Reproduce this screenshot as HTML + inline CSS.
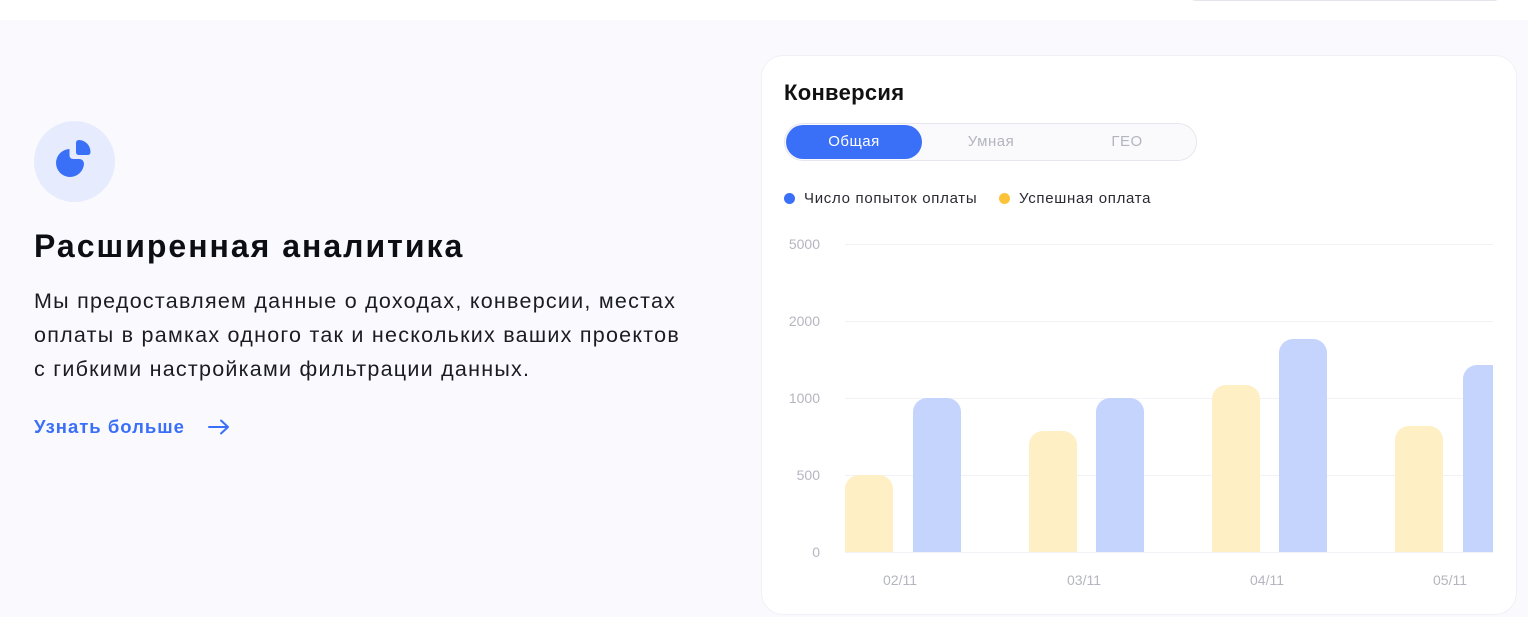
<!DOCTYPE html>
<html><head><meta charset="utf-8"><style>
*{margin:0;padding:0;box-sizing:border-box}
body{width:1528px;height:617px;overflow:hidden;background:#f9f9fe;font-family:"Liberation Sans","Noto Sans CJK SC",sans-serif;position:relative}
.top{position:absolute;left:0;top:0;width:1528px;height:20px;background:#fff}
.topline{position:absolute;left:1190px;top:-10px;width:310px;height:11px;border:1px solid #e4e4ec;border-radius:8px;background:#fff}
.ic{position:absolute;left:34px;top:121px;width:81px;height:81px;border-radius:50%;background:#e6ecfd}
h1{position:absolute;left:34px;top:228px;font-size:32px;font-weight:bold;color:#0d0d14;letter-spacing:2px;white-space:nowrap}
p{position:absolute;left:34px;top:284px;font-size:21.5px;line-height:34px;color:#1b1b22;letter-spacing:1.25px;white-space:nowrap}
.link{position:absolute;left:34px;top:416px;font-size:18.5px;font-weight:bold;color:#3a6ff7;white-space:nowrap;letter-spacing:1px}
.card{position:absolute;left:761px;top:55px;width:756px;height:560px;background:#fff;border-radius:22px;border:1px solid #f0f0f5}
.ct{position:absolute;left:784px;top:80px;font-size:22px;font-weight:bold;color:#111;letter-spacing:0.3px}
.tabs{position:absolute;left:784px;top:123px;width:413px;height:38px;border:1px solid #e6e6ee;border-radius:19px;background:#fafafd}
.tab{position:absolute;top:0;height:36px;line-height:36px;font-size:15px;color:#b4b4bf;text-align:center;letter-spacing:0.5px}
.act{left:1px;top:1px;width:136px;height:34px;line-height:34px;background:#3a6ff7;color:#fff;border-radius:17px}
.leg{position:absolute;top:190px;font-size:15px;color:#2a2a33;white-space:nowrap;letter-spacing:0.7px}
.dot{display:inline-block;width:11px;height:11px;border-radius:50%;margin-right:9px;vertical-align:-1px}
.yl{position:absolute;width:60px;left:760px;text-align:right;font-size:14px;color:#b5b5c0}
.gl{position:absolute;left:845px;width:648px;height:1px;background:#f2f2f6}
.bar{position:absolute;width:48px;border-radius:14px 14px 0 0}
.y{background:#feefc4}.b{background:#c4d4fd}
.xl{position:absolute;top:572px;font-size:14px;color:#b5b5c0}
</style></head><body>
<div class="top"></div><div class="topline"></div>
<div class="ic"><svg width="81" height="81" viewBox="0 0 81 81"><path d="M51 49a14 14 0 1 1-14.5-15v6q0 4 4 4h6q4 0 4.5 5z" fill="#3a6ff7" transform="translate(-1,-6)"/><path d="M43 28q0-3 3-3a12 12 0 0 1 11.5 12q0 3-3 3h-8.5q-3 0-3-3z" fill="#3a6ff7" transform="translate(-1,-6)"/></svg></div>
<h1>Расширенная аналитика</h1>
<p>Мы предоставляем данные о доходах, конверсии, местах<br>оплаты в рамках одного так и нескольких ваших проектов<br>с гибкими настройками фильтрации данных.</p>
<div class="link">Узнать больше <svg width="24" height="16" viewBox="0 0 24 16" style="margin-left:16px;vertical-align:-2px"><path d="M2 8h19M14 1.5l7 6.5-7 6.5" stroke="#3a6ff7" stroke-width="2" fill="none" stroke-linecap="round" stroke-linejoin="round"/></svg></div>
<div class="card"></div>
<div class="ct">Конверсия</div>
<div class="tabs"><div class="tab act">Общая</div><div class="tab" style="left:138px;width:136px">Умная</div><div class="tab" style="left:274px;width:136px">ГЕО</div></div>
<div class="leg" style="left:784px"><span class="dot" style="background:#3a6ff7"></span>Число попыток оплаты</div>
<div class="leg" style="left:999px"><span class="dot" style="background:#fdc338"></span>Успешная оплата</div>
<div class="yl" style="top:236px">5000</div><div class="gl" style="top:244px"></div>
<div class="yl" style="top:313px">2000</div><div class="gl" style="top:321px"></div>
<div class="yl" style="top:390px">1000</div><div class="gl" style="top:398px"></div>
<div class="yl" style="top:467px">500</div><div class="gl" style="top:475px"></div>
<div class="yl" style="top:544px">0</div><div class="gl" style="top:552px"></div>
<div class="bar y" style="left:845px;top:475px;height:77px"></div>
<div class="bar b" style="left:913px;top:398px;height:154px"></div>
<div class="bar y" style="left:1029px;top:431px;height:121px"></div>
<div class="bar b" style="left:1096px;top:398px;height:154px"></div>
<div class="bar y" style="left:1212px;top:385px;height:167px"></div>
<div class="bar b" style="left:1279px;top:339px;height:213px"></div>
<div class="bar y" style="left:1395px;top:426px;height:126px"></div>
<div class="bar b" style="left:1463px;top:365px;height:187px;width:30px;border-radius:14px 0 0 0"></div>
<div class="xl" style="left:883px">02/11</div>
<div class="xl" style="left:1067px">03/11</div>
<div class="xl" style="left:1250px">04/11</div>
<div class="xl" style="left:1433px">05/11</div>
</body></html>
